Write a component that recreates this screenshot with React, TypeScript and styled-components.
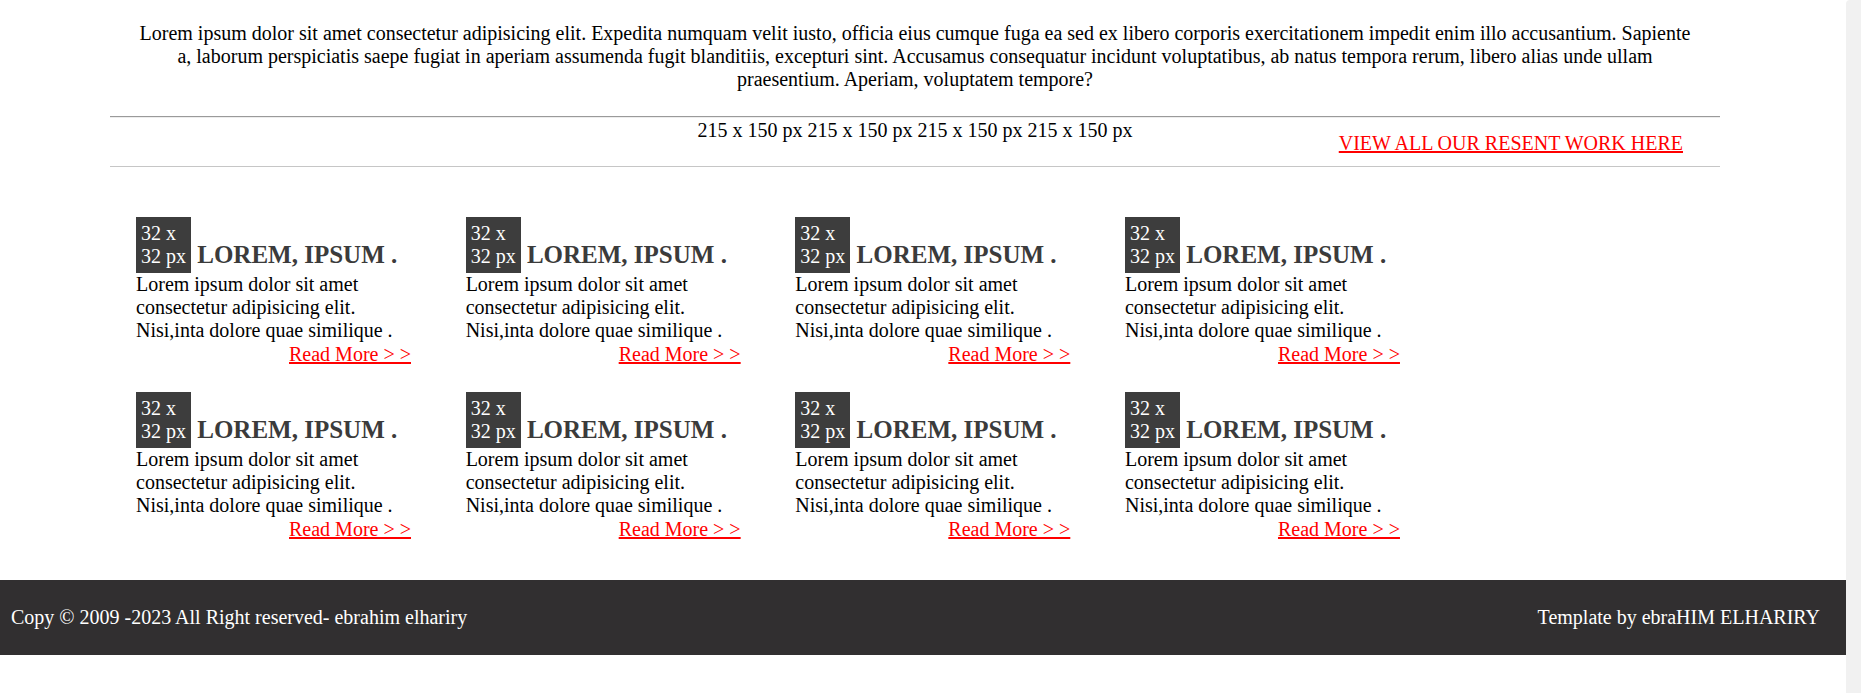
import React from "react";
import styled, { createGlobalStyle } from "styled-components";

const GlobalStyle = createGlobalStyle`
  html, body {
    margin: 0;
    padding: 0;
    background: #ffffff;
  }
  body {
    font-family: "Liberation Serif", "Times New Roman", serif;
    font-size: 20px;
    color: #000000;
  }
`;

const Shell = styled.div`
  display: flex;
  height: 693px;
  overflow: hidden;
`;

const Page = styled.div`
  flex: 1;
  min-width: 0;
  display: flex;
  flex-direction: column;
`;

const ScrollTrack = styled.div`
  width: 15px;
  flex: none;
  background: #f1f1f1;
  border-top-left-radius: 4px;
`;

const Main = styled.main`
  margin-left: 110px;
  width: 1610px;
  display: flex;
  flex-direction: column;
`;

const Intro = styled.p`
  margin: 22px 0 0;
  padding: 0 26px;
  text-align: center;
  line-height: 23px;
`;

const Divider = styled.hr<{ $strong?: boolean }>`
  margin: ${(p) => (p.$strong ? "25px 0 0" : "11px 0 0")};
  height: 0;
  border: 0;
  border-top: 1px solid ${(p) => (p.$strong ? "#9a9a9a" : "#c6c6c6")};
  border-bottom: ${(p) => (p.$strong ? "1px solid #ededed" : "0")};
`;

const Strip = styled.div`
  display: grid;
  grid-template-columns: 1fr auto 1fr;
  padding-top: 1px;
  line-height: 23px;
`;

const Placeholder = styled.span`
  grid-column: 2;
  align-self: start;
`;

const ViewAll = styled.a`
  grid-column: 3;
  justify-self: end;
  align-self: start;
  margin-top: 13px;
  margin-right: 37px;
  color: #ff0000;
  text-decoration: underline;
`;

const CardGrid = styled.section`
  margin-top: 50px;
  padding-left: 26px;
  display: grid;
  grid-template-columns: repeat(4, 275px);
  column-gap: 54.67px;
  row-gap: 26px;
`;

const Card = styled.article`
  display: flex;
  flex-direction: column;
  line-height: 23px;
`;

const CardTitle = styled.h3`
  margin: 0;
  font-size: 25px;
  font-weight: bold;
  line-height: normal;
  color: #3b3b3b;
`;

const IconBox = styled.span`
  display: inline-block;
  padding: 5px;
  background: #3d3d3d;
  color: #ffffff;
  font-size: 20px;
  font-weight: normal;
  line-height: 23px;
  vertical-align: baseline;
`;

const CardText = styled.p`
  margin: 0;
`;

const ReadMore = styled.a`
  align-self: flex-end;
  margin-top: 1px;
  color: #ff0000;
  text-decoration: underline;
`;

const Footer = styled.footer`
  margin-top: 39px;
  display: flex;
  justify-content: space-between;
  align-items: center;
  padding: 26px 26px 26px 11px;
  background: #312f30;
  color: #ffffff;
  line-height: 23px;
`;

const intro =
  "Lorem ipsum dolor sit amet consectetur adipisicing elit. Expedita numquam velit iusto, officia eius cumque fuga ea sed ex libero corporis exercitationem impedit enim illo accusantium. Sapiente a, laborum perspiciatis saepe fugiat in aperiam assumenda fugit blanditiis, excepturi sint. Accusamus consequatur incidunt voluptatibus, ab natus tempora rerum, libero alias unde ullam praesentium. Aperiam, voluptatem tempore?";

const cards = Array.from({ length: 8 }, (_, i) => i);

export default function App() {
  return (
    <>
      <GlobalStyle />
      <Shell>
        <Page>
          <Main>
            <Intro>{intro}</Intro>
            <Divider $strong />
            <Strip>
              <Placeholder>215 x 150 px 215 x 150 px 215 x 150 px 215 x 150 px</Placeholder>
              <ViewAll href="#">VIEW ALL OUR RESENT WORK HERE</ViewAll>
            </Strip>
            <Divider />
            <CardGrid>
              {cards.map((i) => (
                <Card key={i}>
                  <CardTitle>
                    <IconBox>
                      32 x<br />32 px
                    </IconBox>{" "}
                    LOREM, IPSUM .
                  </CardTitle>
                  <CardText>
                    Lorem ipsum dolor sit amet
                    <br />
                    consectetur adipisicing elit.
                    <br />
                    Nisi,inta dolore quae similique .
                  </CardText>
                  <ReadMore href="#">Read More &gt; &gt;</ReadMore>
                </Card>
              ))}
            </CardGrid>
          </Main>
          <Footer>
            <span>Copy © 2009 -2023 All Right reserved- ebrahim elhariry</span>
            <span>Template by ebraHIM ELHARIRY</span>
          </Footer>
        </Page>
        <ScrollTrack />
      </Shell>
    </>
  );
}
